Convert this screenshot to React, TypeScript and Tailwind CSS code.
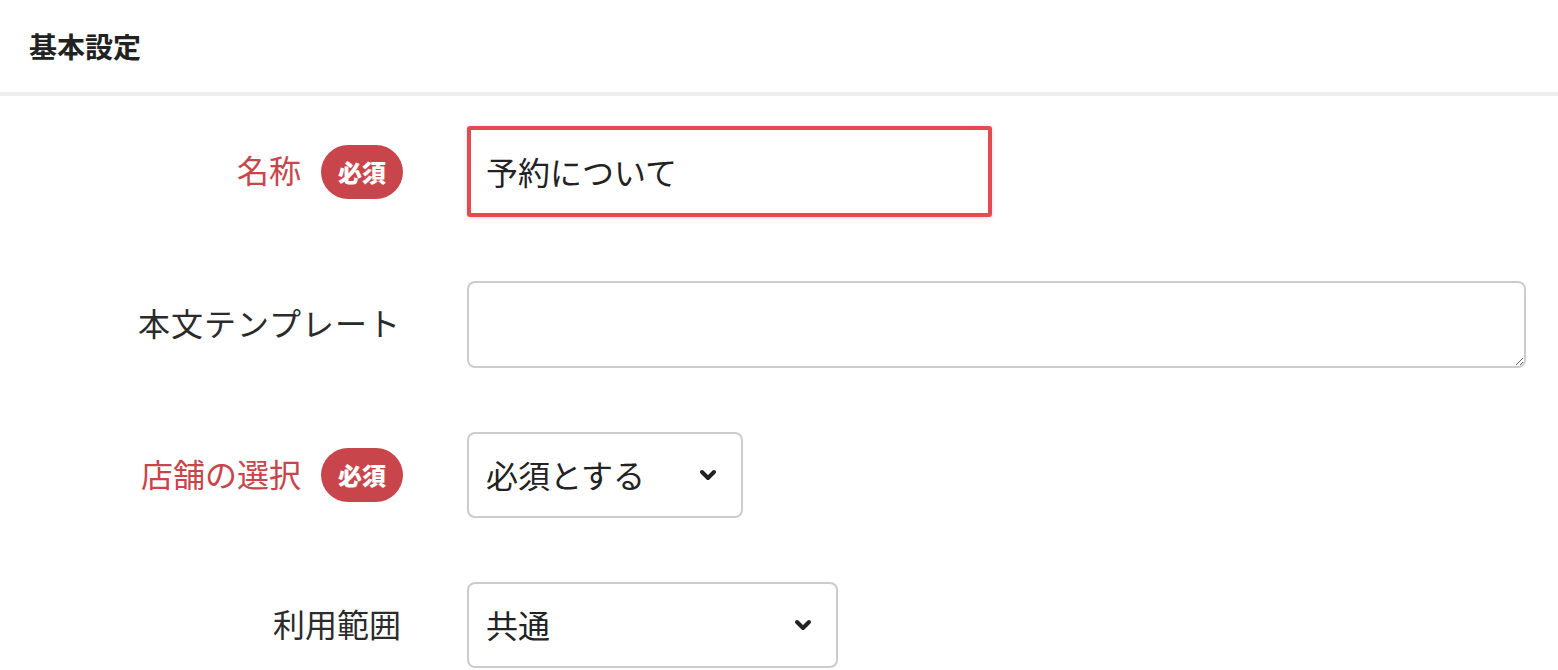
import React from "react";

const font = { fontFamily: '"Noto Sans CJK JP", "Noto Sans", sans-serif' };

const Badge = () => (
  <span className="ml-[20px] inline-flex h-[54px] w-[82px] items-center justify-center rounded-full bg-[#c9454c] text-[24px] font-black text-white">
    必須
  </span>
);

const Chevron = () => (
  <svg width="18" height="12" viewBox="0 0 18 12" className="shrink-0">
    <path
      d="M3 3 L9 9 L15 3"
      fill="none"
      stroke="#222"
      strokeWidth="4"
      strokeLinecap="round"
      strokeLinejoin="round"
    />
  </svg>
);

const Row = ({
  label,
  required,
  wide,
  children,
}: {
  label: string;
  required?: boolean;
  wide?: boolean;
  children: React.ReactNode;
}) => (
  <div className="flex items-center">
    <div className="flex w-[403px] shrink-0 items-center justify-end">
      <span
        className={`-mt-[5px] text-[32px] leading-none ${
          required ? "text-[#c9454c]" : "pr-[2px] text-[#2b2b2b]"
        } ${wide ? "tracking-[1px]" : ""}`}
      >
        {label}
      </span>
      {required && <Badge />}
    </div>
    <div className="ml-[64px] flex-1">{children}</div>
  </div>
);

const Select = ({ value, width }: { value: string; width: string }) => (
  <div
    className={`flex h-[86px] ${width} items-center justify-between rounded-[8px] border-2 border-[#cccccc] bg-white pl-[17px] pr-[24px]`}
  >
    <span className="-mt-[2px] text-[32px] text-[#222]">{value}</span>
    <Chevron />
  </div>
);

export default function App() {
  return (
    <div className="min-h-screen bg-white" style={font}>
      <div className="flex h-[96px] items-center border-b-4 border-[#eeeeee] pl-[29px]">
        <h2 className="text-[28px] font-bold text-[#222]">基本設定</h2>
      </div>

      <div className="flex flex-col gap-[64px] pt-[30px] pr-[32px]">
        <Row label="名称" required>
          <div className="flex h-[91px] w-[525px] items-center rounded-[3px] border-4 border-[#e54a50] bg-white pl-[15px] shadow-[0_1px_4px_rgba(0,0,0,0.15)]">
            <span className="-mt-[2px] text-[32px] text-[#222]">予約について</span>
          </div>
        </Row>

        <Row label="本文テンプレート" wide>
          <textarea
            className="block h-[87px] w-full resize-y rounded-[8px] border-2 border-[#cccccc] bg-white outline-none"
            defaultValue=""
          />
        </Row>

        <Row label="店舗の選択" required>
          <Select value="必須とする" width="w-[276px]" />
        </Row>

        <Row label="利用範囲">
          <Select value="共通" width="w-[371px]" />
        </Row>
      </div>
    </div>
  );
}
